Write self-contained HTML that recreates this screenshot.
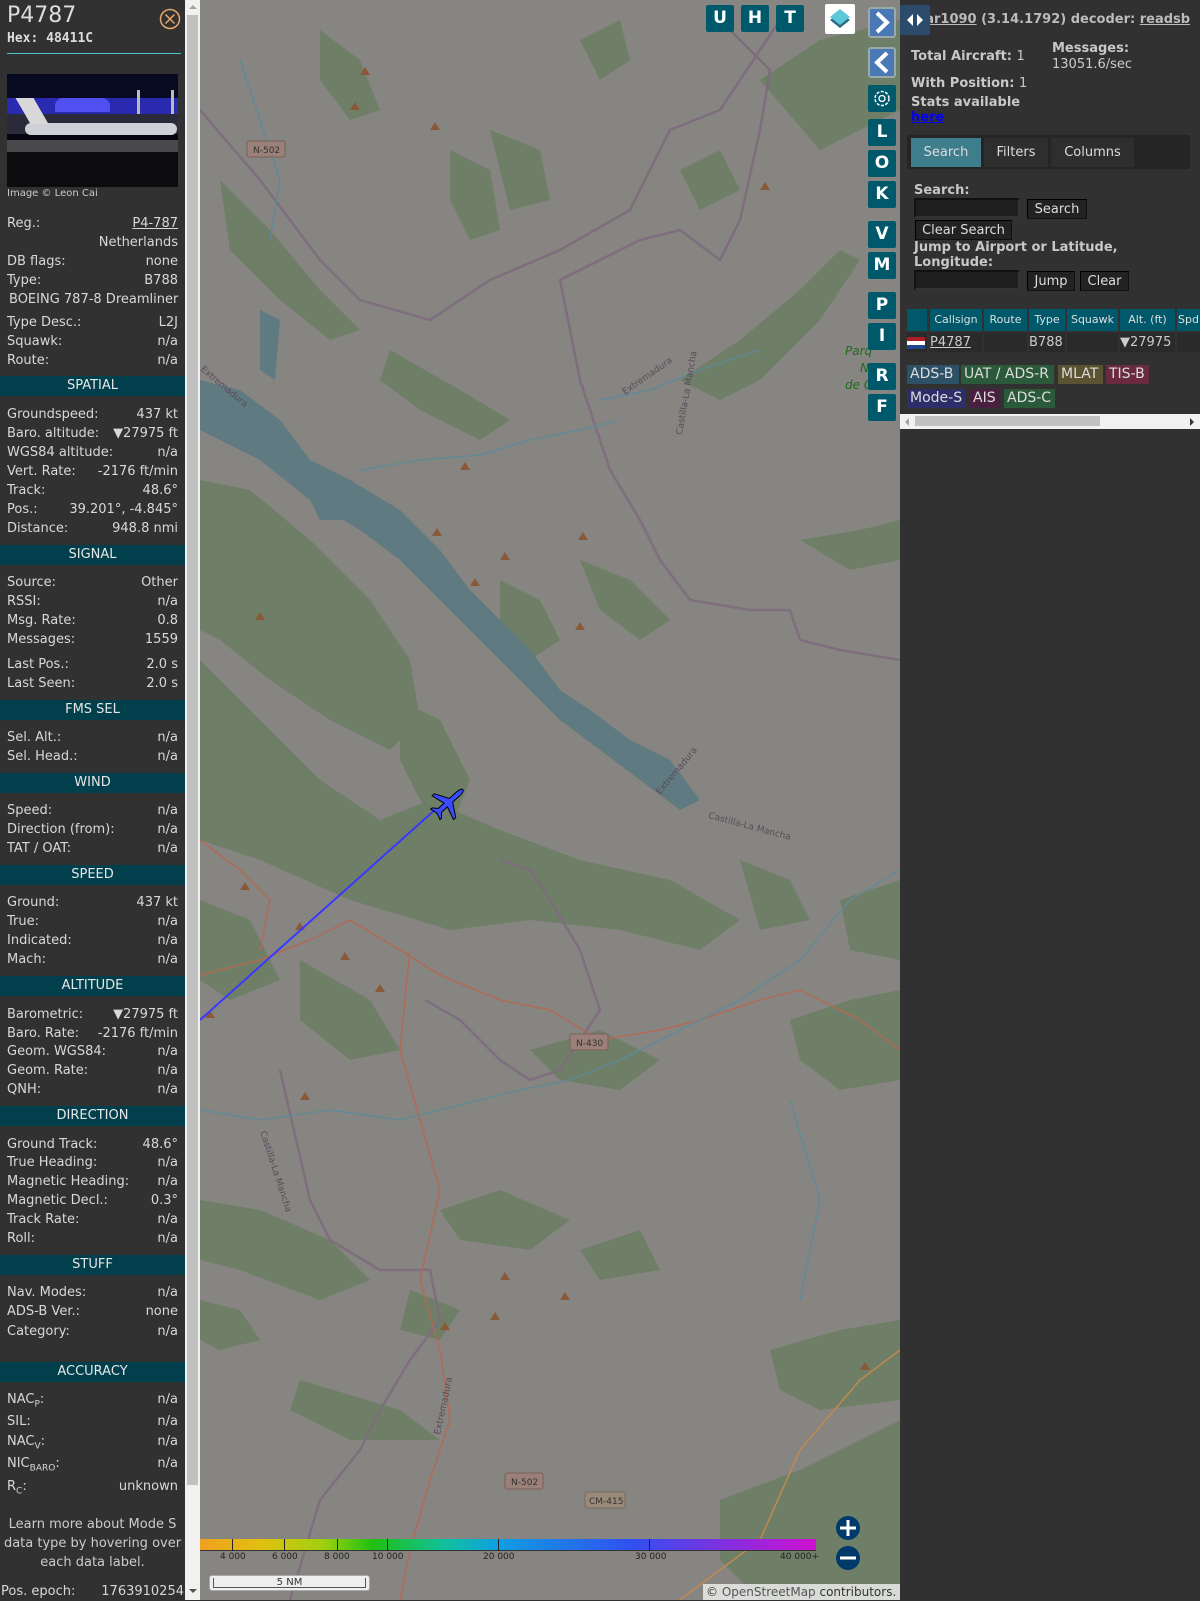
<!DOCTYPE html>
<html><head><meta charset="utf-8">
<style>
*{box-sizing:border-box;margin:0;padding:0}
html,body{width:1200px;height:1600px;overflow:hidden;background:#313131;font-family:"DejaVu Sans","Liberation Sans",sans-serif;}
#side{position:absolute;left:0;top:0;width:185px;height:1600px;background:#313131;color:#d8d8d8;font-size:13px}
.r{position:absolute;left:7px;width:171px;height:18px;line-height:18px;white-space:nowrap;margin-top:2px}
.r .v{position:absolute;right:0;top:0}
.h{position:absolute;left:0;width:185px;height:20px;line-height:20px;background:#003f4b;color:#e6e6e6;text-align:center;font-size:13px}
#sb{position:absolute;left:185px;top:0;width:15px;height:1600px;background:#f1f1f1}
#map{position:absolute;left:200px;top:0;width:700px;height:1600px;background:#878581;overflow:hidden}
.mb{position:absolute;width:28px;height:27px;background:#00596b;color:#fff;font-weight:bold;font-size:17px;text-align:center;line-height:27px;border-radius:2px}
#right{position:absolute;left:900px;top:0;width:300px;height:1600px;background:#313131;color:#cfcfcf;font-size:13px}
.b{position:absolute;font-weight:bold;color:#c8c8c8}
.btn{position:absolute;height:20px;line-height:19px;background:#222;color:#ddd;border:1px solid #111;border-top-color:#000;border-left-color:#000;text-align:center;font-size:13px}
.inp{position:absolute;height:20px;background:#1e1e1e;border:2px solid #111;border-bottom-color:#333;border-right-color:#333}
.th{position:absolute;top:309px;height:22px;line-height:22px;background:#00596b;color:#ddd;font-size:11px;text-align:center}
.td{position:absolute;top:333px;height:19px;line-height:19px;background:#2a2a2a;color:#ccc;font-size:13px}
.bd{position:absolute;height:19px;line-height:19px;color:#ddd;font-size:14px;padding:0 3px}
</style></head><body>
<div id="side">
<div style="position:absolute;left:7px;top:3px;font-size:22px;color:#ddd">P4787</div>
<div style="position:absolute;left:7px;top:31px;font-family:'DejaVu Sans Mono',monospace;font-weight:bold;font-size:13px;color:#ddd">Hex: 48411C</div>
<svg style="position:absolute;left:159px;top:8px" width="22" height="22"><circle cx="11" cy="11" r="9.5" fill="none" stroke="#e7a76a" stroke-width="1.5"/><path d="M6.5 6.5L15.5 15.5M15.5 6.5L6.5 15.5" stroke="#e7a76a" stroke-width="1.5"/></svg>
<div style="position:absolute;left:7px;top:53px;width:174px;height:1px;background:#4ec0cc"></div>
<div style="position:absolute;left:7px;top:74px;width:171px;height:113px;background:#05060f;overflow:hidden">
<div style="position:absolute;left:0;top:0;width:171px;height:25px;background:#070a20"></div>
<div style="position:absolute;left:0;top:24px;width:171px;height:16px;background:#2a2ab0"></div>
<div style="position:absolute;left:48px;top:24px;width:55px;height:14px;background:#5050f0;border-radius:8px 8px 0 0"></div>
<div style="position:absolute;left:130px;top:16px;width:3px;height:30px;background:#bbb"></div>
<div style="position:absolute;left:164px;top:16px;width:3px;height:30px;background:#bbb"></div>
<div style="position:absolute;left:0;top:40px;width:171px;height:20px;background:#2a2a3a"></div>
<div style="position:absolute;left:18px;top:49px;width:152px;height:12px;background:#cfcfd6;border-radius:6px"></div>
<div style="position:absolute;left:16px;top:24px;width:18px;height:26px;background:#d8d8d8;transform:skewX(30deg)"></div>
<div style="position:absolute;left:0;top:66px;width:171px;height:12px;background:#48484a"></div>
<div style="position:absolute;left:0;top:78px;width:171px;height:35px;background:#0c0c0e"></div>
</div>
<div style="position:absolute;left:7px;top:188px;font-size:10px;color:#ccc">Image © Leon Cai</div>
<div class="r" style="top:213px">Reg.:<span class="v" style="text-decoration:underline">P4-787</span></div>
<div class="r" style="top:232px"><span class="v">Netherlands</span></div>
<div class="r" style="top:251px">DB flags:<span class="v">none</span></div>
<div class="r" style="top:270px">Type:<span class="v">B788</span></div>
<div class="r" style="top:289px;left:9px">BOEING 787-8 Dreamliner</div>
<div class="r" style="top:312px">Type Desc.:<span class="v">L2J</span></div>
<div class="r" style="top:331px">Squawk:<span class="v">n/a</span></div>
<div class="r" style="top:350px">Route:<span class="v">n/a</span></div>
<div class="h" style="top:376px">SPATIAL</div>
<div class="r" style="top:404px">Groundspeed:<span class="v">437 kt</span></div>
<div class="r" style="top:423px">Baro. altitude:<span class="v">▼27975 ft</span></div>
<div class="r" style="top:442px">WGS84 altitude:<span class="v">n/a</span></div>
<div class="r" style="top:461px">Vert. Rate:<span class="v">-2176 ft/min</span></div>
<div class="r" style="top:480px">Track:<span class="v">48.6°</span></div>
<div class="r" style="top:499px">Pos.:<span class="v">39.201°, -4.845°</span></div>
<div class="r" style="top:518px">Distance:<span class="v">948.8 nmi</span></div>
<div class="h" style="top:545px">SIGNAL</div>
<div class="r" style="top:572px">Source:<span class="v">Other</span></div>
<div class="r" style="top:591px">RSSI:<span class="v">n/a</span></div>
<div class="r" style="top:610px">Msg. Rate:<span class="v">0.8</span></div>
<div class="r" style="top:629px">Messages:<span class="v">1559</span></div>
<div class="r" style="top:654px">Last Pos.:<span class="v">2.0 s</span></div>
<div class="r" style="top:673px">Last Seen:<span class="v">2.0 s</span></div>
<div class="h" style="top:700px">FMS SEL</div>
<div class="r" style="top:727px">Sel. Alt.:<span class="v">n/a</span></div>
<div class="r" style="top:746px">Sel. Head.:<span class="v">n/a</span></div>
<div class="h" style="top:773px">WIND</div>
<div class="r" style="top:800px">Speed:<span class="v">n/a</span></div>
<div class="r" style="top:819px">Direction (from):<span class="v">n/a</span></div>
<div class="r" style="top:838px">TAT / OAT:<span class="v">n/a</span></div>
<div class="h" style="top:865px">SPEED</div>
<div class="r" style="top:892px">Ground:<span class="v">437 kt</span></div>
<div class="r" style="top:911px">True:<span class="v">n/a</span></div>
<div class="r" style="top:930px">Indicated:<span class="v">n/a</span></div>
<div class="r" style="top:949px">Mach:<span class="v">n/a</span></div>
<div class="h" style="top:976px">ALTITUDE</div>
<div class="r" style="top:1004px">Barometric:<span class="v">▼27975 ft</span></div>
<div class="r" style="top:1023px">Baro. Rate:<span class="v">-2176 ft/min</span></div>
<div class="r" style="top:1041px">Geom. WGS84:<span class="v">n/a</span></div>
<div class="r" style="top:1060px">Geom. Rate:<span class="v">n/a</span></div>
<div class="r" style="top:1079px">QNH:<span class="v">n/a</span></div>
<div class="h" style="top:1106px">DIRECTION</div>
<div class="r" style="top:1134px">Ground Track:<span class="v">48.6°</span></div>
<div class="r" style="top:1152px">True Heading:<span class="v">n/a</span></div>
<div class="r" style="top:1171px">Magnetic Heading:<span class="v">n/a</span></div>
<div class="r" style="top:1190px">Magnetic Decl.:<span class="v">0.3°</span></div>
<div class="r" style="top:1209px">Track Rate:<span class="v">n/a</span></div>
<div class="r" style="top:1228px">Roll:<span class="v">n/a</span></div>
<div class="h" style="top:1255px">STUFF</div>
<div class="r" style="top:1282px">Nav. Modes:<span class="v">n/a</span></div>
<div class="r" style="top:1301px">ADS-B Ver.:<span class="v">none</span></div>
<div class="r" style="top:1321px">Category:<span class="v">n/a</span></div>
<div class="h" style="top:1362px">ACCURACY</div>
<div class="r" style="top:1389px">NAC<sub style="font-size:9px">P</sub>:<span class="v">n/a</span></div>
<div class="r" style="top:1411px">SIL:<span class="v">n/a</span></div>
<div class="r" style="top:1431px">NAC<sub style="font-size:9px">V</sub>:<span class="v">n/a</span></div>
<div class="r" style="top:1453px">NIC<sub style="font-size:9px">BARO</sub>:<span class="v">n/a</span></div>
<div class="r" style="top:1476px">R<sub style="font-size:9px">C</sub>:<span class="v">unknown</span></div>
<div style="position:absolute;left:0;top:1515px;width:185px;text-align:center;line-height:19px;color:#ccc">Learn more about Mode S data type by hovering over each data label.</div>
<div class="r" style="top:1581px;left:1px;width:183px">Pos. epoch:<span class="v">1763910254</span></div>
</div>
<div id="sb"><div style="position:absolute;left:2px;top:15px;width:11px;height:1470px;background:#c1c1c1"></div>
<div style="position:absolute;left:4px;top:5px;border:4px solid transparent;border-bottom:4px solid #a3a3a3;border-top:0"></div>
<div style="position:absolute;left:4px;top:1589px;border:4px solid transparent;border-top:4px solid #505050;border-bottom:0"></div></div>

<div id="map">
<svg width="700" height="1600" style="position:absolute;left:0;top:0">
<g fill="#6f7e67">
<path d="M0 480 L50 490 L110 540 L170 600 L210 660 L220 720 L190 750 L130 720 L70 680 L20 640 L0 630Z"/>
<path d="M0 660 L60 720 L120 780 L180 820 L230 800 L300 830 L380 860 L470 880 L540 920 L500 950 L420 930 L330 920 L250 930 L150 900 L60 860 L0 840Z"/>
<path d="M200 700 L240 720 L270 780 L250 830 L220 800 L200 760Z"/>
<path d="M20 180 L70 230 L120 290 L160 330 L130 340 L80 300 L30 250Z"/>
<path d="M190 350 L260 390 L310 420 L280 440 L220 410 L180 380Z"/>
<path d="M380 560 L430 580 L470 620 L440 640 L400 610Z"/>
<path d="M300 580 L340 600 L360 640 L330 660 L300 630Z"/>
<path d="M480 380 L540 340 L600 290 L640 250 L660 260 L620 320 L560 380 L520 400Z"/>
<path d="M600 540 L660 530 L700 520 L700 560 L650 570Z"/>
<path d="M0 1200 L60 1210 L130 1240 L170 1280 L120 1300 L40 1270 L0 1260Z"/>
<path d="M0 1300 L40 1310 L60 1340 L20 1350 L0 1340Z"/>
<path d="M520 1500 L600 1470 L660 1440 L700 1420 L700 1600 L560 1600 L520 1560Z"/>
<path d="M570 1350 L640 1330 L700 1320 L700 1400 L620 1410 L580 1390Z"/>
<path d="M330 1050 L400 1030 L460 1060 L420 1090 L360 1080Z"/>
<path d="M0 900 L50 920 L80 980 L30 1000 L0 980Z"/>
<path d="M590 1020 L650 1000 L700 990 L700 1080 L640 1090 L600 1060Z"/>
<path d="M540 860 L590 880 L610 920 L560 930Z"/>
<path d="M100 960 L170 1000 L200 1050 L150 1060 L100 1020Z"/>
<path d="M240 1210 L300 1190 L370 1220 L330 1250 L260 1240Z"/>
<path d="M100 1380 L200 1410 L240 1440 L150 1440 L90 1410Z"/>
<path d="M560 80 L620 40 L700 20 L700 110 L620 150Z"/>
<path d="M120 30 L160 60 L180 110 L150 120 L120 80Z"/>
<path d="M290 130 L340 150 L350 200 L310 210Z"/>
<path d="M380 40 L420 20 L430 60 L400 80Z"/>
<path d="M480 170 L520 150 L540 190 L500 210Z"/>
<path d="M250 150 L290 170 L300 230 L270 240 L250 200Z"/>
<path d="M640 900 L700 880 L700 960 L650 950Z"/>
<path d="M210 1290 L260 1310 L240 1340 L200 1330Z"/>
<path d="M380 1250 L440 1230 L460 1270 L400 1280Z"/>
</g>
<g fill="#5f7a80">
<path d="M0 380 L40 390 L80 420 L110 460 L150 480 L200 510 L240 550 L270 590 L300 620 L330 650 L360 690 L390 710 L430 740 L470 760 L500 800 L480 810 L440 780 L400 750 L360 720 L330 690 L300 660 L270 630 L240 600 L200 560 L160 530 L110 500 L60 460 L20 440 L0 430Z"/>
<path d="M60 310 L80 320 L75 380 L60 370Z"/>
<path d="M100 480 L130 470 L150 520 L120 520Z"/>
</g>
<g fill="none" stroke-width="2.5" stroke="#7d6b7d" opacity=".9">
<path d="M0 110 L60 180 L120 260 L160 300 L230 320 L290 280 L360 250 L430 210 L470 130 L520 110 L560 50 L580 20"/>
<path d="M530 30 L570 70 L560 130 L540 220 L520 260 L480 230 L440 240 L360 280 L380 380 L410 470 L440 520 L460 560 L490 600 L550 610 L590 610 L600 640 L640 650 L700 660"/>
<path d="M225 1000 L260 1020 L300 1060 L330 1080 L360 1070 L380 1040 L400 1010 L380 950 L350 900 L330 870 L300 860"/>
<path d="M80 1070 L110 1200 L130 1240 L180 1270 L230 1270 L240 1320 L210 1360 L180 1410 L160 1450 L120 1500 L90 1600"/>
</g>
<g fill="none" stroke="#b06a55" stroke-width="1.5">
<path d="M0 975 L60 960 L110 940 L150 920 L200 950 L240 975 L300 1000 L350 1010 L400 1040 L460 1030 L500 1020 L560 1000 L600 990 L660 1020 L700 1050"/>
<path d="M210 950 L200 1050 L220 1120 L240 1190 L220 1280 L240 1350 L250 1420 L230 1480 L210 1550 L200 1600"/>
<path d="M0 840 L40 870 L70 900 L60 950"/>
</g>
<path d="M480 1600 L560 1540 L600 1450 L660 1380 L700 1350" fill="none" stroke="#c08a50" stroke-width="1.5"/>
<g fill="none" stroke="#5d8a9a" stroke-width="1.3">
<path d="M0 1110 L60 1120 L130 1110 L200 1120 L260 1105 L320 1090 L370 1080 L420 1060 L480 1030 L540 1000 L600 960 L650 900 L700 870"/>
<path d="M160 470 L220 460 L280 455 L330 440 L380 430 L420 420"/>
<path d="M40 60 L60 120 L80 180 L70 240"/>
<path d="M400 400 L450 390 L500 370 L560 350"/>
<path d="M590 1100 L620 1200 L600 1300"/>
</g>
<g fill="#8a5a38">
<path d="M232 536l5 -8 5 8z"/><path d="M270 586l5 -8 5 8z"/><path d="M300 560l5 -8 5 8z"/><path d="M378 540l5 -8 5 8z"/><path d="M375 630l5 -8 5 8z"/><path d="M55 620l5 -8 5 8z"/><path d="M40 890l5 -8 5 8z"/><path d="M95 930l5 -8 5 8z"/><path d="M140 960l5 -8 5 8z"/><path d="M175 992l5 -8 5 8z"/><path d="M240 1330l5 -8 5 8z"/><path d="M300 1280l5 -8 5 8z"/><path d="M360 1300l5 -8 5 8z"/><path d="M660 1370l5 -8 5 8z"/><path d="M150 110l5 -8 5 8z"/><path d="M230 130l5 -8 5 8z"/><path d="M100 1100l5 -8 5 8z"/><path d="M160 75l5 -8 5 8z"/><path d="M560 190l5 -8 5 8z"/><path d="M260 470l5 -8 5 8z"/><path d="M5 1018l5 -8 5 8z"/><path d="M290 1320l5 -8 5 8z"/>
</g>
<g font-family="DejaVu Sans" font-size="9" fill="#5a4a5a">
<text x="460" y="795" transform="rotate(-50 460 795)">Extremadura</text>
<text x="508" y="818" transform="rotate(15 508 818)">Castilla-La Mancha</text>
<text x="60" y="1132" transform="rotate(72 60 1132)">Castilla-La Mancha</text>
<text x="0" y="370" transform="rotate(40 0 370)">Extremadura</text>
<text x="425" y="395" transform="rotate(-35 425 395)">Extremadura</text>
<text x="482" y="435" transform="rotate(-80 482 435)">Castilla-La Mancha</text>
<text x="240" y="1435" transform="rotate(-78 240 1435)">Extremadura</text>
</g>
<g font-family="DejaVu Sans" font-size="9" fill="#333">
<rect x="47" y="141" width="38" height="16" fill="#9a8078" stroke="#7a6058" rx="2"/><text x="53" y="153">N-502</text>
<rect x="370" y="1034" width="38" height="16" fill="#9a8078" stroke="#7a6058" rx="2"/><text x="376" y="1046">N-430</text>
<rect x="305" y="1473" width="38" height="16" fill="#9a8078" stroke="#7a6058" rx="2"/><text x="311" y="1485">N-502</text>
<rect x="385" y="1492" width="40" height="16" fill="#9a8b78" stroke="#7a6b58" rx="2"/><text x="389" y="1504">CM-415</text>
</g>
<text x="645" y="355" font-family="DejaVu Sans" font-size="12" font-style="italic" fill="#1d6b1d">Parq</text>
<text x="660" y="372" font-family="DejaVu Sans" font-size="12" font-style="italic" fill="#1d6b1d">N</text>
<text x="645" y="389" font-family="DejaVu Sans" font-size="12" font-style="italic" fill="#1d6b1d">de C</text>
<line x1="0" y1="1020" x2="237" y2="808" stroke="#3838ff" stroke-width="2"/>
<g transform="translate(248,803) rotate(48)">
<path d="M0 -20 C2 -20 2.5 -16 2.5 -12 L2.5 -4 L16 4 L16 7 L2.5 3 L2.5 11 L7 15 L7 17 L0 15 L-7 17 L-7 15 L-2.5 11 L-2.5 3 L-16 7 L-16 4 L-2.5 -4 L-2.5 -12 C-2.5 -16 -2 -20 0 -20Z" fill="#3a4cff" stroke="#000" stroke-width="1"/>
</g>
</svg>
<div class="mb" style="left:506px;top:5px">U</div>
<div class="mb" style="left:541px;top:5px">H</div>
<div class="mb" style="left:576px;top:5px">T</div>
<div style="position:absolute;left:625px;top:4px;width:30px;height:30px;background:#fff;border-radius:2px">
<svg width="30" height="30"><path d="M5 16 L15 24 L25 16 L15 9Z" fill="#2a6a80"/><path d="M5 13 L15 21 L25 13 L15 5Z" fill="#5cc8d8"/></svg></div>
<div style="position:absolute;left:668px;top:7px;width:28px;height:31px;background:#4a78b5;border:2px solid #9aa;border-radius:3px"><svg width="24" height="27"><path d="M7 4 L17 13.5 L7 23" fill="none" stroke="#fff" stroke-width="4"/></svg></div>
<div style="position:absolute;left:668px;top:47px;width:28px;height:31px;background:#4a78b5;border:2px solid #9aa;border-radius:3px"><svg width="24" height="27"><path d="M17 4 L7 13.5 L17 23" fill="none" stroke="#fff" stroke-width="4"/></svg></div>
<div class="mb" style="left:668px;top:85px"><svg width="28" height="27"><circle cx="14" cy="13.5" r="7" fill="none" stroke="#fff" stroke-width="1.5" stroke-dasharray="3 1.5"/><circle cx="14" cy="13.5" r="3" fill="none" stroke="#fff" stroke-width="1.3"/></svg></div>
<div class="mb" style="left:668px;top:119px">L</div>
<div class="mb" style="left:668px;top:150px">O</div>
<div class="mb" style="left:668px;top:181px">K</div>
<div class="mb" style="left:668px;top:221px">V</div>
<div class="mb" style="left:668px;top:252px">M</div>
<div class="mb" style="left:668px;top:292px">P</div>
<div class="mb" style="left:668px;top:323px">I</div>
<div class="mb" style="left:668px;top:363px">R</div>
<div class="mb" style="left:668px;top:394px">F</div>
<div style="position:absolute;left:0;top:1539px;width:616px;height:12px;background:linear-gradient(90deg,#f0a020 0%,#e0c010 10%,#a0d010 20%,#20c010 28%,#10c0a0 40%,#10a0e0 48%,#3050f0 70%,#8030e0 85%,#d010d0 100%);border-bottom:1px solid #333"></div>
<div style="position:absolute;top:1539px;left:32px;width:1px;height:12px;background:#222"></div>
<div style="position:absolute;top:1539px;left:84px;width:1px;height:12px;background:#222"></div>
<div style="position:absolute;top:1539px;left:137px;width:1px;height:12px;background:#222"></div>
<div style="position:absolute;top:1539px;left:187px;width:1px;height:12px;background:#222"></div>
<div style="position:absolute;top:1539px;left:298px;width:1px;height:12px;background:#222"></div>
<div style="position:absolute;top:1539px;left:449px;width:1px;height:12px;background:#222"></div>
<div style="position:absolute;top:1552px;left:0;width:620px;font-family:'DejaVu Sans';font-size:9px;color:#222">
<span style="position:absolute;left:20px">4 000</span><span style="position:absolute;left:72px">6 000</span><span style="position:absolute;left:124px">8 000</span><span style="position:absolute;left:172px">10 000</span><span style="position:absolute;left:283px">20 000</span><span style="position:absolute;left:435px">30 000</span><span style="position:absolute;left:580px">40 000+</span></div>
<div style="position:absolute;left:9px;top:1575px;width:161px;height:16px;background:#eee;border-radius:3px;border:1px solid #aaa;text-align:center;font-size:10px;line-height:14px;color:#333"><div style="position:absolute;left:3px;top:2px;width:153px;height:10px;border:1px solid #555;border-top:0"></div>5 NM</div>
<svg style="position:absolute;left:635px;top:1516px" width="26" height="56"><circle cx="13" cy="12" r="12" fill="#003a6b"/><path d="M5 12H21M13 4V20" stroke="#fff" stroke-width="3"/><circle cx="13" cy="42" r="12" fill="#003a6b"/><path d="M5 42H21" stroke="#fff" stroke-width="3"/></svg>
<div style="position:absolute;left:503px;top:1584px;width:197px;height:16px;background:rgba(235,235,235,.85);font-size:12px;color:#333;line-height:16px;padding-left:3px">© <span style="color:#555">OpenStreetMap</span> contributors.</div>
</div>

<div id="right">
<div style="position:absolute;left:19px;top:12px;font-weight:bold;font-size:13px;color:#bbb;white-space:nowrap"><u>tar1090</u> (3.14.1792) decoder: <u>readsb</u></div>
<div style="position:absolute;left:0;top:5px;width:30px;height:30px;background:#2c4a6a;border-radius:2px"><svg width="30" height="30"><path d="M13 9L7 15L13 21Z M17 9L23 15L17 21Z" fill="#fff"/></svg></div>
<div class="b" style="left:11px;top:49px">Total Aircraft: <span style="font-weight:normal">1</span></div>
<div class="b" style="left:152px;top:41px">Messages:</div>
<div style="position:absolute;left:152px;top:57px;color:#ccc">13051.6/sec</div>
<div class="b" style="left:11px;top:76px">With Position: <span style="font-weight:normal">1</span></div>
<div class="b" style="left:11px;top:95px">Stats available</div>
<div style="position:absolute;left:11px;top:110px;color:#00f;font-weight:bold;text-decoration:underline">here</div>
<div style="position:absolute;left:7px;top:135px;width:283px;height:34px;background:#252525;border-radius:2px"></div>
<div style="position:absolute;left:11px;top:138px;width:70px;height:29px;background:#3e7d8c;color:#ddd;text-align:center;line-height:29px">Search</div>
<div style="position:absolute;left:84px;top:138px;width:64px;height:29px;background:#2e2e2e;color:#ddd;text-align:center;line-height:29px">Filters</div>
<div style="position:absolute;left:151px;top:138px;width:83px;height:29px;background:#2e2e2e;color:#ddd;text-align:center;line-height:29px">Columns</div>
<div class="b" style="left:14px;top:183px">Search:</div>
<div class="inp" style="left:14px;top:198px;width:106px"></div>
<div class="btn" style="left:127px;top:199px;width:60px">Search</div>
<div class="btn" style="left:15px;top:220px;width:97px">Clear Search</div>
<div class="b" style="left:14px;top:240px">Jump to Airport or Latitude,</div>
<div class="b" style="left:14px;top:255px">Longitude:</div>
<div class="inp" style="left:14px;top:270px;width:106px"></div>
<div class="btn" style="left:127px;top:271px;width:48px">Jump</div>
<div class="btn" style="left:180px;top:271px;width:49px">Clear</div>
<div class="th" style="left:7px;width:20px"></div>
<div class="th" style="left:30px;width:52px">Callsign</div>
<div class="th" style="left:84px;width:43px">Route</div>
<div class="th" style="left:129px;width:36px">Type</div>
<div class="th" style="left:167px;width:51px">Squawk</div>
<div class="th" style="left:220px;width:55px">Alt. (ft)</div>
<div class="th" style="left:277px;width:23px">Spd</div>
<div class="td" style="left:7px;width:20px"><div style="margin-top:4px;width:18px;height:12px;background:linear-gradient(#ae1c28 33%,#fff 33%,#fff 66%,#21468b 66%)"></div></div>
<div class="td" style="left:30px;width:52px;text-decoration:underline">P4787</div>
<div class="td" style="left:84px;width:43px"></div>
<div class="td" style="left:129px;width:36px">B788</div>
<div class="td" style="left:167px;width:51px"></div>
<div class="td" style="left:220px;width:55px">▼27975</div>
<div class="td" style="left:277px;width:23px"></div>
<div class="bd" style="left:7px;top:365px;width:52px;background:#2d5268">ADS-B</div>
<div class="bd" style="left:61px;top:365px;width:93px;background:#2b5a3a">UAT / ADS-R</div>
<div class="bd" style="left:158px;top:365px;width:45px;background:#5a5230">MLAT</div>
<div class="bd" style="left:206px;top:365px;width:43px;background:#6a2a40">TIS-B</div>
<div class="bd" style="left:7px;top:389px;width:59px;background:#2d2d6a">Mode-S</div>
<div class="bd" style="left:70px;top:389px;width:30px;background:#4a2040">AIS</div>
<div class="bd" style="left:104px;top:389px;width:51px;background:#2b5a3a">ADS-C</div>
<div style="position:absolute;left:0;top:414px;width:300px;height:15px;background:#f1f1f1"><div style="position:absolute;left:15px;top:2px;width:185px;height:10px;background:#c1c1c1"></div>
<div style="position:absolute;left:5px;top:4px;border:4px solid transparent;border-right:4px solid #a3a3a3;border-left:0"></div>
<div style="position:absolute;left:290px;top:4px;border:4px solid transparent;border-left:4px solid #333;border-right:0"></div></div>
</div>
</body></html>
